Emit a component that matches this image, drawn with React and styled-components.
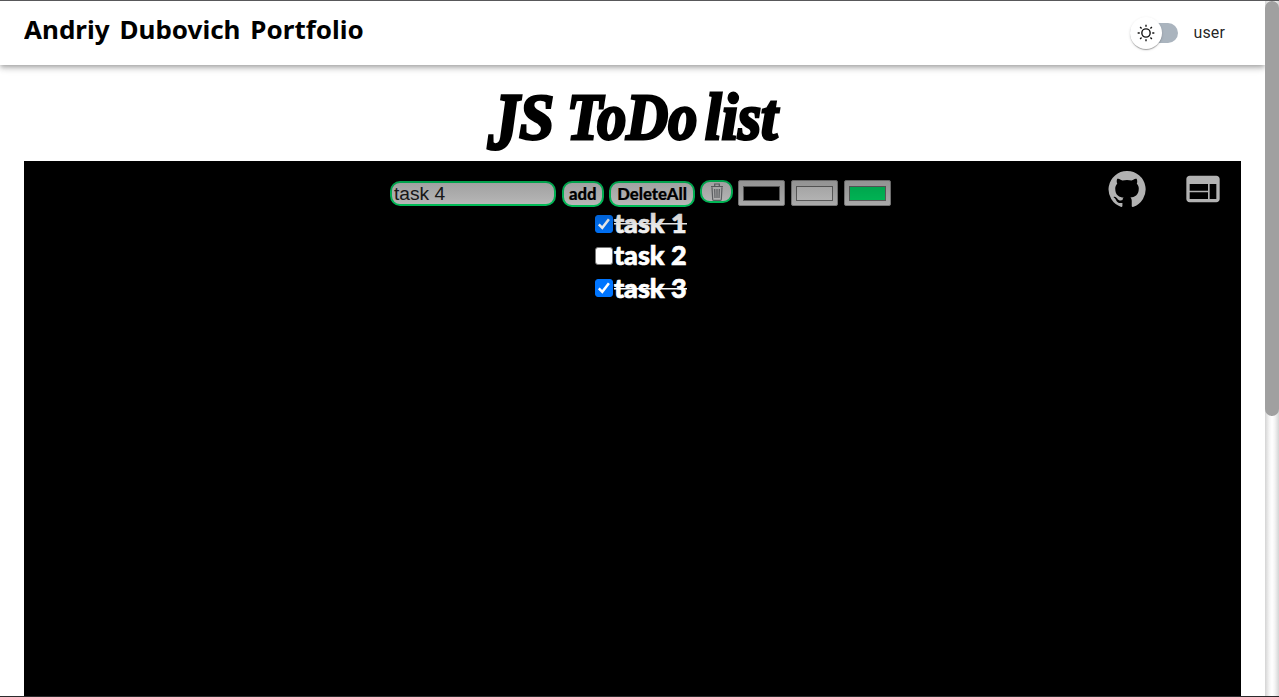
import React from 'react';
import styled, { createGlobalStyle } from 'styled-components';
import { MdWeb } from 'react-icons/md';

const GlobalStyle = createGlobalStyle`
  * { box-sizing: border-box; }
  html, body { margin: 0; padding: 0; background: #fff; overflow: hidden; }
`;

const Window = styled.div`
  display: grid;
  grid-template-columns: 1fr 14px;
  height: 697px;
  border-top: 1px solid #58585a;
  border-bottom: 1px solid #2c2a2c;
  overflow: hidden;
  font-family: Roboto, sans-serif;
`;
const Page = styled.div`
  display: flex;
  flex-direction: column;
  min-width: 0;
  overflow: hidden;
`;
const Scrollbar = styled.div`
  background: linear-gradient(to right, #d4d4d4, #f4f4f4 30%, #fff 50%, #f4f4f4 70%, #d4d4d4);
`;
const ScrollThumb = styled.div`
  height: 415px;
  border-radius: 7px;
  background: #a0a0a0;
`;

const Header = styled.header`
  display: flex;
  flex: 0 0 64px;
  justify-content: space-between;
  padding: 0 40px 0 24px;
  background: #fff;
  box-shadow: 0 2px 4px -1px rgba(0,0,0,.2), 0 4px 5px rgba(0,0,0,.14), 0 1px 10px rgba(0,0,0,.12);
`;
const Brand = styled.div`
  padding-top: 11px;
  font: 700 25px/34px "Noto Sans", sans-serif;
  word-spacing: 3px;
  color: #000;
  white-space: nowrap;
  transform: scaleX(${(p) => p.$stretch});
  transform-origin: left;
`;
const UserArea = styled.div`
  display: flex;
  align-items: center;
  gap: 15px;
  font-size: 16px;
  letter-spacing: .15px;
  color: rgba(0,0,0,.87);
`;
const UserName = styled.span`
  padding-bottom: 2px;
`;
const Track = styled.div`
  display: flex;
  align-items: center;
  width: 48px;
  height: 20px;
  border-radius: 10px;
  background: #aab4be;
`;
const Thumb = styled.div`
  display: grid;
  place-items: center;
  width: 32px;
  height: 32px;
  border-radius: 50%;
  background: #fff;
  box-shadow: 0 2px 1px -1px rgba(0,0,0,.2), 0 1px 1px rgba(0,0,0,.14), 0 1px 3px rgba(0,0,0,.12);
`;

const Title = styled.h1`
  display: flex;
  flex: 0 0 96px;
  margin: 0;
  padding: 16px 0 0 488px;
  font: italic 700 66px/72px "Liberation Serif", serif;
  color: #000;
`;
const Word = styled.span`
  flex: 0 0 ${(p) => p.$slot}px;
  width: ${(p) => p.$slot}px;
  min-width: 0;
  white-space: nowrap;
  -webkit-text-stroke: 3px #000;
  transform: scaleX(${(p) => p.$stretch});
  transform-origin: left;
`;
const Swash = styled.span`
  display: inline-block;
  transform: scaleY(1.22);
  transform-origin: 50% 14px;
`;

const Stage = styled.main`
  position: relative;
  flex: 1;
  margin: 0 24px;
  padding-top: 19px;
  background: #000;
`;
const Shade = styled.div`
  position: absolute;
  inset: 0 0 auto;
  height: 80px;
  background: linear-gradient(to bottom, rgba(0,0,0,.42), rgba(0,0,0,.25) 50%, rgba(0,0,0,0));
`;
const Actions = styled.div`
  position: absolute;
  top: 8px;
  right: 18px;
  display: flex;
  gap: 36px;
  color: #b2b2b2;
  svg { width: 40px; height: 40px; display: block; fill: currentColor; }
`;

const Toolbar = styled.div`
  display: flex;
  align-items: flex-start;
  gap: 5px;
  height: 28px;
  padding-left: 366px;
`;
const TaskInput = styled.input`
  width: 166px;
  height: 25px;
  margin: 1px .6px 0 0;
  padding: 0 2px;
  border: 2px solid #00f070;
  border-radius: 10px;
  background: #efefef;
  color: #222;
  font: 19.2px/21px "Liberation Sans", sans-serif;
  outline: none;
`;
const Button = styled.button`
  display: grid;
  place-items: center;
  width: ${(p) => p.$w}px;
  height: ${(p) => p.$h || 26}px;
  margin-top: ${(p) => (p.$h ? 0 : 1)}px;
  padding: 0;
  border: 2px solid #00f070;
  border-radius: 10px;
  background: #efefef;
  color: #000;
  font: 900 16.7px/20px Lato, sans-serif;
  -webkit-text-stroke: .2px #000;
`;
const Swatch = styled.div`
  width: 47px;
  height: 26px;
  margin-right: .8px;
  padding: 5px 4px 4px;
  border: 1px solid #999;
  border-radius: 2px;
  background: #dcdcdc;
`;
const Chip = styled.div`
  height: 15px;
  border: 1px solid #777;
  background: ${(p) => p.$color};
`;

const Tasks = styled.ul`
  list-style: none;
  margin: 0;
  padding: 0 0 0 571px;
`;
const Task = styled.li`
  display: flex;
  align-items: center;
  height: 32.3px;
  color: #fff;
  font: 900 27px/32px Lato, sans-serif;
`;
const Check = styled.span`
  display: grid;
  place-items: center;
  width: 18px;
  height: 18px;
  margin: -1px .9px 0 0;
  border: 1px solid ${(p) => (p.$on ? '#0075ff' : '#767676')};
  border-radius: 3px;
  background: ${(p) => (p.$on ? '#0075ff' : '#fff')};
`;
const Label = styled.span`
  display: block;
  margin-top: -2px;
  -webkit-text-stroke: .7px #fff;
  background: ${(p) => (p.$done ? 'linear-gradient(#fff, #fff) 0 16px / 100% 1.5px no-repeat' : 'none')};
`;

const Sun = () => (
  <svg width="20" height="20" viewBox="0 0 20 20" fill="#111">
    <path d="M9.305 1.667V3.75h1.389V1.667h-1.39zm-4.707 1.95l-.982.982L5.09 6.072l.982-.982-1.473-1.473zm10.802 0L13.927 5.09l.982.982 1.473-1.473-.982-.982zM10 5.139a4.872 4.872 0 00-4.862 4.86A4.872 4.872 0 0010 14.862 4.872 4.872 0 0014.86 10 4.872 4.872 0 0010 5.139zm0 1.389A3.462 3.462 0 0113.471 10a3.462 3.462 0 01-3.473 3.472A3.462 3.462 0 016.527 10 3.462 3.462 0 0110 6.528zM1.665 9.305v1.39h2.083v-1.39H1.666zm14.583 0v1.39h2.084v-1.39h-2.084zM5.09 13.928L3.616 15.4l.982.982 1.473-1.473-.982-.982zm9.82 0l-.982.982 1.473 1.473.982-.982-1.473-1.473zM9.305 16.25v2.083h1.389V16.25h-1.39z" />
  </svg>
);
const GitHub = () => (
  <svg viewBox="0 0 24 24">
    <path d="M12 1.27a11 11 0 00-3.48 21.46c.55.09.73-.28.73-.55v-1.84c-3.03.64-3.67-1.46-3.67-1.46-.55-1.29-1.28-1.65-1.28-1.65-.92-.65.1-.65.1-.65 1.1 0 1.73 1.1 1.73 1.1.92 1.65 2.57 1.2 3.21.92a2 2 0 01.64-1.47c-2.47-.27-5.04-1.19-5.04-5.5 0-1.1.46-2.1 1.2-2.84a3.76 3.76 0 010-2.93s.91-.28 3.11 1.1c1.8-.49 3.7-.49 5.5 0 2.1-1.38 3.02-1.1 3.02-1.1a3.76 3.76 0 01.1 2.93c.83.74 1.2 1.74 1.2 2.94 0 4.21-2.57 5.13-5.04 5.4.45.37.82.92.82 2.02v3.03c0 .27.1.64.73.55A11 11 0 0012 1.27" />
  </svg>
);
const Trash = () => (
  <svg width="14" height="18" viewBox="0 0 14 18" fill="none" stroke="#7c8084" strokeWidth="1.2">
    <path d="M1 3.5h12M4.7 3.2V1h4.6v2.2M2 4.2l.7 12.3q0 .8 1 .8h6.6q1 0 1-.8L12 4.2M4.7 6l.3 9M7 6v9M9.3 6L9 15" />
  </svg>
);
const Tick = () => (
  <svg width="16" height="16" viewBox="0 0 16 16" fill="none" stroke="#fff" strokeWidth="2.5">
    <path d="M2.8 8.3l3.5 3.5 6.6-8.5" />
  </svg>
);

const tasks = [
  { name: 'task 1', done: true },
  { name: 'task 2', done: false },
  { name: 'task 3', done: true },
];

export default function App() {
  return (
    <Window>
      <GlobalStyle />
      <Page>
        <Header>
          <Brand $stretch={1.04}>Andriy Dubovich Portfolio</Brand>
          <UserArea>
            <Track><Thumb><Sun /></Thumb></Track>
            <UserName>user</UserName>
          </UserArea>
        </Header>
        <Title>
          <Word $slot={79} $stretch={0.95}><Swash>J</Swash>S</Word>
          <Word $slot={138} $stretch={0.88}>ToDo</Word>
          <Word $slot={76} $stretch={0.9}>list</Word>
        </Title>
        <Stage>
          <Toolbar>
            <TaskInput defaultValue="task 4" />
            <Button $w={42.5}>add</Button>
            <Button $w={86}>DeleteAll</Button>
            <Button $w={33} $h={23}><Trash /></Button>
            <Swatch><Chip $color="#000" /></Swatch>
            <Swatch><Chip $color="#efefef" /></Swatch>
            <Swatch><Chip $color="#00f070" /></Swatch>
          </Toolbar>
          <Tasks>
            {tasks.map((t) => (
              <Task key={t.name}>
                <Check $on={t.done}>{t.done && <Tick />}</Check>
                <Label $done={t.done}>{t.name}</Label>
              </Task>
            ))}
          </Tasks>
          <Shade />
          <Actions><GitHub /><MdWeb /></Actions>
        </Stage>
      </Page>
      <Scrollbar><ScrollThumb /></Scrollbar>
    </Window>
  );
}
